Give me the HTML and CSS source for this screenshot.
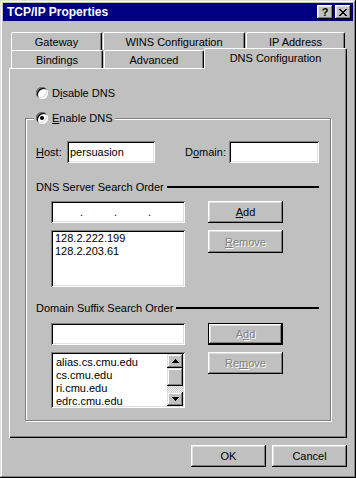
FILE: index.html
```html
<!DOCTYPE html>
<html lang="en">
<head>
  <meta charset="UTF-8">
  <title>TCP/IP Properties</title>
  <link rel="stylesheet" href="styles.css">
</head>
<body>
  <div class="window">

    <!-- caption -->
    <div class="titlebar">
      <span class="title">TCP/IP Properties</span>
      <div class="title-buttons">
        <span class="title-btn">?</span>
        <span class="title-btn">
          <svg width="8" height="7" viewBox="0 0 8 7" shape-rendering="crispEdges">
            <rect x="0" y="0" width="2" height="1"/><rect x="6" y="0" width="2" height="1"/>
            <rect x="1" y="1" width="2" height="1"/><rect x="5" y="1" width="2" height="1"/>
            <rect x="2" y="2" width="4" height="1"/>
            <rect x="3" y="3" width="2" height="1"/>
            <rect x="2" y="4" width="4" height="1"/>
            <rect x="1" y="5" width="2" height="1"/><rect x="5" y="5" width="2" height="1"/>
            <rect x="0" y="6" width="2" height="1"/><rect x="6" y="6" width="2" height="1"/>
          </svg>
        </span>
      </div>
    </div>

    <!-- two rows of tabs -->
    <div class="tabs">
      <div class="tab-row">
        <div class="tab tab-gateway">Gateway</div>
        <div class="tab tab-wins">WINS Configuration</div>
        <div class="tab tab-ip">IP Address</div>
      </div>
      <div class="tab-row">
        <div class="tab tab-bindings">Bindings</div>
        <div class="tab tab-advanced">Advanced</div>
        <div class="tab tab-dns selected">DNS Configuration</div>
      </div>
    </div>

    <div class="panel">
      <div class="radio-line">
        <span class="radio"></span>
        <span>D<u>i</u>sable DNS</span>
      </div>

      <div class="group">
        <div class="legend">
          <span class="radio checked"></span>
          <span><u>E</u>nable DNS</span>
        </div>

        <div class="field-row">
          <span class="lbl-host"><u>H</u>ost:</span>
          <span class="field host">persuasion</span>
          <span class="lbl-domain">D<u>o</u>main:</span>
          <span class="field domain"></span>
        </div>

        <div class="section">DNS Server Search Order<span class="rule"></span></div>
        <div class="order">
          <div class="col-left">
            <div class="field ip"><span>.</span><span>.</span><span>.</span></div>
            <div class="listbox list-servers">
              <div>128.2.222.199</div>
              <div>128.2.203.61</div>
            </div>
          </div>
          <div class="col-right">
            <div class="btn"><span><u>A</u>dd</span></div>
            <div class="btn btn-tall disabled"><span><u>R</u>emove</span></div>
          </div>
        </div>

        <div class="section section-2">Domain Suffix Search Order<span class="rule"></span></div>
        <div class="order order-2">
          <div class="col-left">
            <div class="field"></div>
            <div class="listbox list-suffix">
              <div class="items">
                <div>alias.cs.cmu.edu</div>
                <div>cs.cmu.edu</div>
                <div>ri.cmu.edu</div>
                <div>edrc.cmu.edu</div>
              </div>
              <div class="scrollbar">
                <div class="sb-btn sb-up">
                  <svg width="7" height="4" viewBox="0 0 7 4" shape-rendering="crispEdges"><rect x="3" y="0" width="1" height="1"/><rect x="2" y="1" width="3" height="1"/><rect x="1" y="2" width="5" height="1"/><rect x="0" y="3" width="7" height="1"/></svg>
                </div>
                <div class="sb-thumb"></div>
                <div class="sb-track"></div>
                <div class="sb-btn sb-down">
                  <svg width="7" height="4" viewBox="0 0 7 4" shape-rendering="crispEdges"><rect x="0" y="0" width="7" height="1"/><rect x="1" y="1" width="5" height="1"/><rect x="2" y="2" width="3" height="1"/><rect x="3" y="3" width="1" height="1"/></svg>
                </div>
              </div>
            </div>
          </div>
          <div class="col-right">
            <div class="btn default disabled"><span>A<u>d</u>d</span></div>
            <div class="btn disabled"><span>Re<u>m</u>ove</span></div>
          </div>
        </div>
      </div>
    </div>

    <div class="footer">
      <div class="btn">OK</div>
      <div class="btn">Cancel</div>
    </div>
  </div>
</body>
</html>
```

FILE: styles.css
```css
html,body{margin:0;height:100%}
body{background:#c0c0c0;font-family:"Liberation Sans",Arial,sans-serif;font-size:11px;color:#000}
u{text-underline-offset:1px}

/* window frame */
.window{box-sizing:border-box;width:356px;height:478px;padding:3px;display:flex;flex-direction:column;background:#c0c0c0;
  box-shadow:inset -1px -1px #000,inset 1px 1px #dfdfdf,inset -2px -2px #808080,inset 2px 2px #fff}

.titlebar{height:18px;flex:none;display:flex;align-items:center;justify-content:space-between;padding:0 2px 0 4px;background:#000080;color:#fff}
.title{font-weight:bold;font-size:12px}
.title-buttons{display:flex;gap:2px}
.title-btn{box-sizing:border-box;width:16px;height:14px;display:flex;align-items:center;justify-content:center;background:#c0c0c0;color:#000;font-weight:bold;font-size:11px;
  box-shadow:inset -1px -1px #000,inset 1px 1px #fff,inset -2px -2px #808080,inset 2px 2px #dfdfdf}

/* tabs */
.tabs{margin:11px 0 0 8px}
.tab-row{display:flex;height:18px}
.tab{box-sizing:border-box;height:18px;display:flex;align-items:center;justify-content:center;background:#c0c0c0;
  border-top:1px solid #fff;border-left:1px solid #fff;border-right:1px solid #000;border-radius:2px 2px 0 0;box-shadow:inset -1px 0 #808080}
.tab-gateway{width:91px;margin-right:1px}
.tab-wins{width:142px;margin-right:1px}
.tab-ip{width:99px}
.tab-bindings{width:92px;margin-right:1px}
.tab-advanced{width:100px}
.tab-dns{width:143px}
.tab.selected{position:relative;z-index:1;height:21px;margin-top:-2px;padding-bottom:3px}

/* property page */
.panel{box-sizing:border-box;width:338px;height:370px;margin-left:6px;padding:18px 0 0 16px;
  box-shadow:inset 1px 1px #fff,inset -1px -1px #000,inset -2px -2px #808080}

.radio-line,.legend{display:flex;align-items:center;gap:4px;height:14px}
.radio-line{margin-left:11px}
.radio{box-sizing:border-box;width:12px;height:12px;border-radius:50%;background:#fff;display:flex;align-items:center;justify-content:center;
  box-shadow:inset 1px 1px #808080,inset -1px -1px #fff,inset 2px 2px #000,inset -2px -2px #dfdfdf}
.radio.checked::after{content:"";width:4px;height:4px;border-radius:50%;background:#000}

.group{box-sizing:border-box;width:306px;height:303px;margin-top:18px;padding:0 10px;border:1px solid #808080;box-shadow:inset 1px 1px #fff,1px 1px #fff}
.legend{width:max-content;margin:-8px 0 0 -2px;padding:0 2px;background:#c0c0c0}

.field{box-sizing:border-box;height:22px;background:#fff;display:flex;align-items:center;padding:0 3px;
  box-shadow:inset 1px 1px #808080,inset -1px -1px #fff,inset 2px 2px #000,inset -2px -2px #dfdfdf}
.field-row{display:flex;align-items:center;height:22px;margin-top:16px}
.lbl-host{width:31px}
.host{width:88px}
.lbl-domain{width:44px;margin-left:30px}
.domain{width:90px}

.section{display:flex;align-items:center;height:14px;margin-top:17px}
.section-2{margin-top:14px}
.rule{flex:1;height:2px;margin:0 1px 0 3px;background:#000}

.order{display:flex;gap:23px;margin:7px 0 0 15px}
.order-2{margin-top:8px}
.col-left{width:134px;display:flex;flex-direction:column;gap:7px}
.col-right{width:75px;display:flex;flex-direction:column;gap:7px}

.ip{padding-left:29px;gap:31px}
.ip span{width:3px}

.listbox{box-sizing:border-box;background:#fff;line-height:13px;
  box-shadow:inset 1px 1px #808080,inset -1px -1px #fff,inset 2px 2px #000,inset -2px -2px #dfdfdf}
.list-servers{height:57px;padding:2px 4px}
.list-suffix{height:56px;padding:2px;display:flex}
.list-suffix .items{flex:1;padding:2px 3px}

.scrollbar{width:16px;display:flex;flex-direction:column}
.sb-btn,.sb-thumb{box-sizing:border-box;background:#c0c0c0;display:flex;align-items:center;justify-content:center;
  box-shadow:inset -1px -1px #000,inset 1px 1px #dfdfdf,inset -2px -2px #808080,inset 2px 2px #fff}
.sb-up{height:14px}
.sb-thumb{height:18px}
.sb-track{height:6px;background:repeating-conic-gradient(#c0c0c0 0 25%,#fff 0 50%) 0 0/2px 2px}
.sb-down{height:14px}

/* push buttons */
.btn{box-sizing:border-box;width:75px;height:22px;display:flex;align-items:center;justify-content:center;background:#c0c0c0;
  box-shadow:inset -1px -1px #000,inset 1px 1px #fff,inset -2px -2px #808080,inset 2px 2px #dfdfdf}
.btn-tall{height:23px}
.btn.default{border:1px solid #000;box-shadow:inset -1px -1px #000,inset 1px 1px #fff,inset -2px -2px #808080,inset 2px 2px #dfdfdf}
.btn.disabled{color:#808080;text-shadow:1px 1px 0 #fff}

.footer{display:flex;justify-content:flex-end;gap:6px;margin:7px 6px 0 0}
```
